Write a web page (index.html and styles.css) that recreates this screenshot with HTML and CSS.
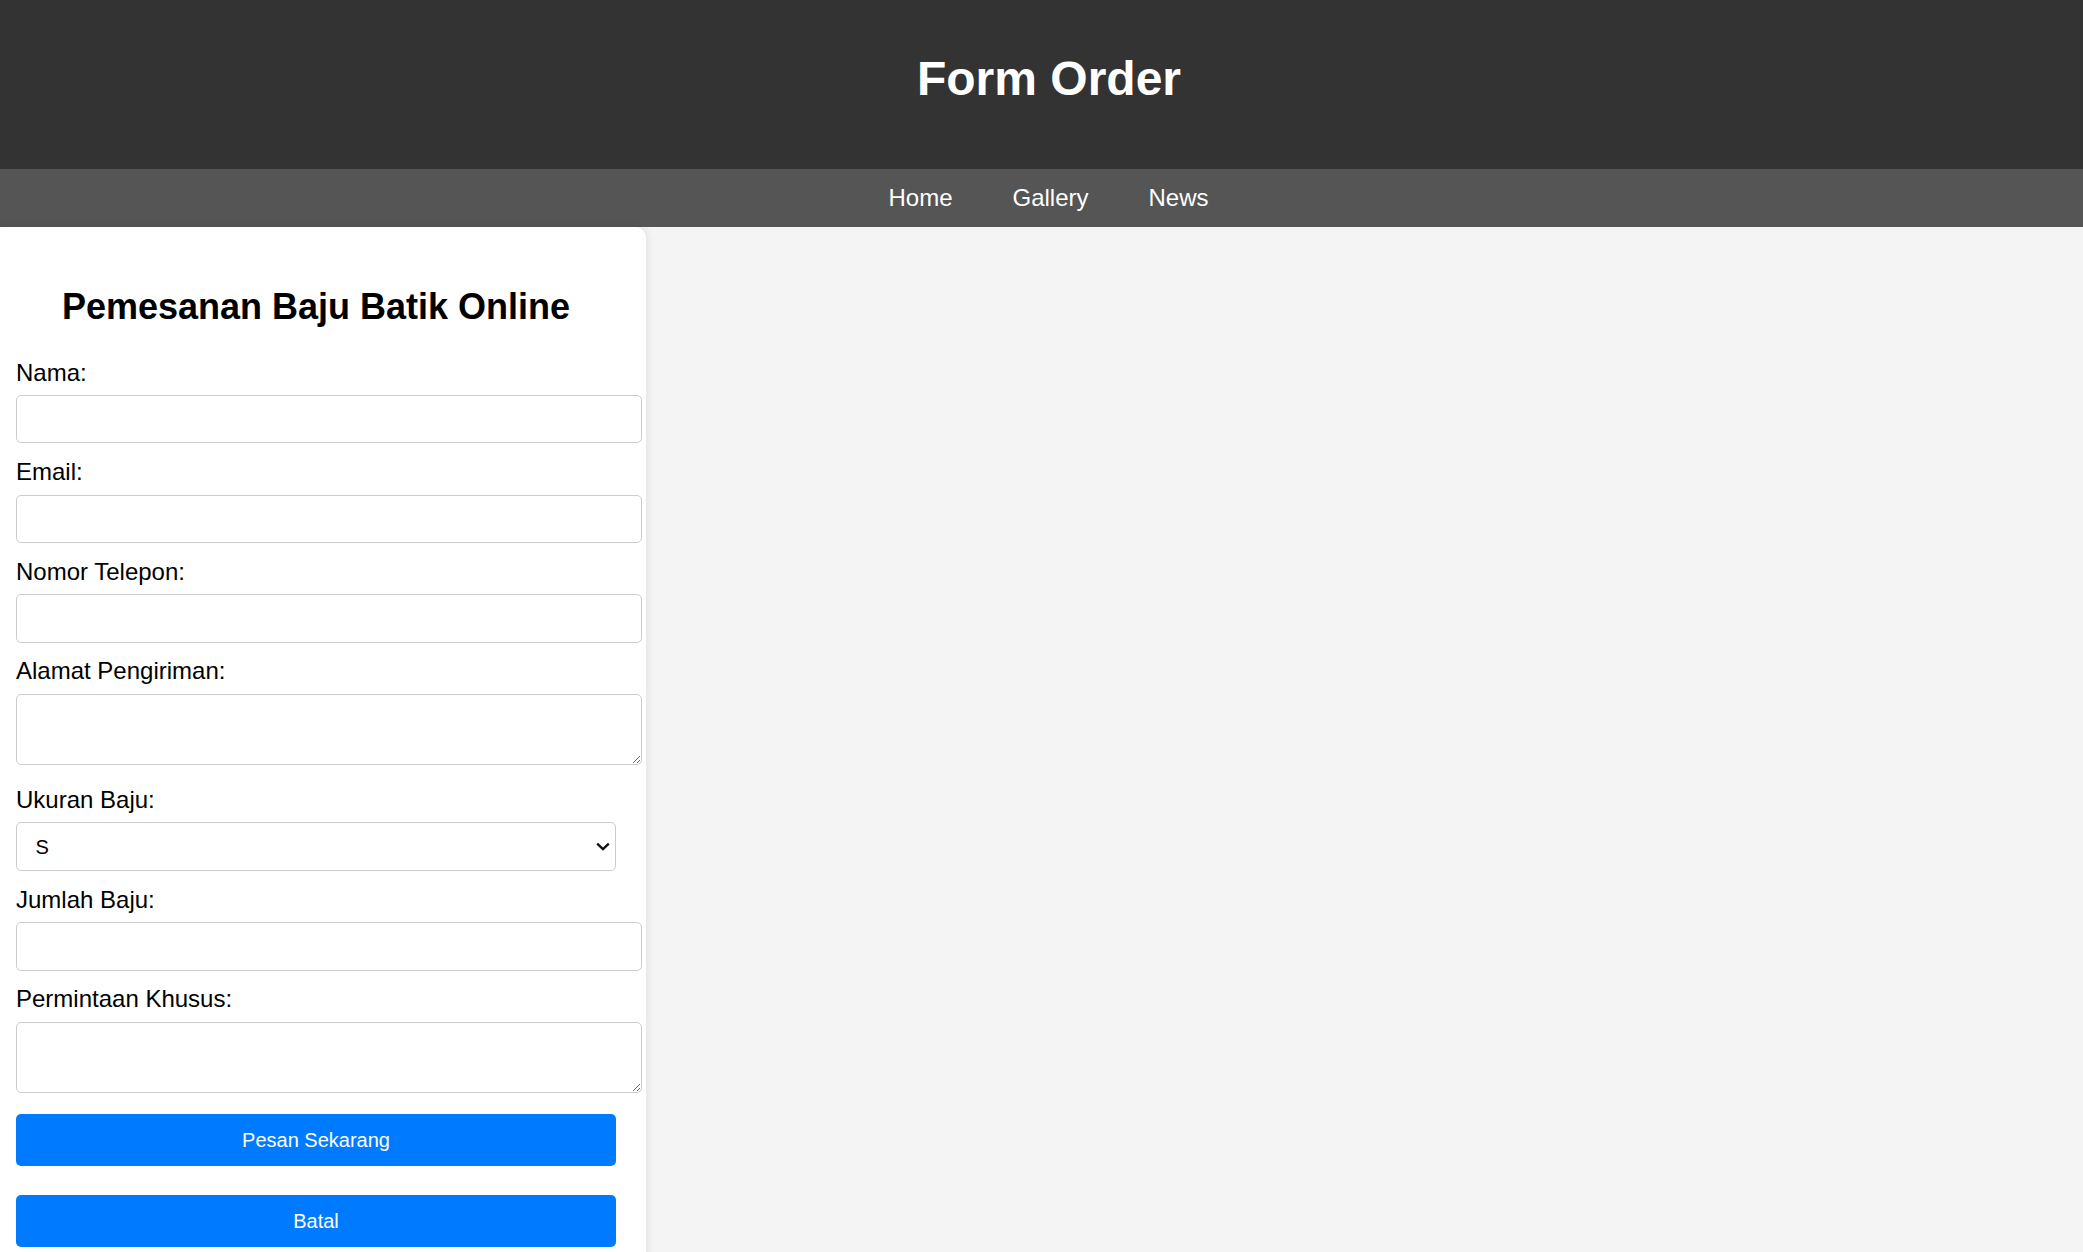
FILE: index.html
```html
<!DOCTYPE html>
<html lang="id">
<head>
<meta charset="utf-8">
<title>Form Order</title>
<link rel="stylesheet" href="styles.css">
</head>
<body>
<header class="site-header">
  <h1 class="site-title">Form Order</h1>
</header>
<nav class="site-nav">
  <a href="#" class="nav-link">Home</a>
  <a href="#" class="nav-link">Gallery</a>
  <a href="#" class="nav-link">News</a>
</nav>
<main class="page">
  <section class="card">
    <h2 class="card-title">Pemesanan Baju Batik Online</h2>
    <form class="order-form">
      <label class="field-label" for="nama">Nama:</label>
      <input class="field-input" type="text" id="nama">

      <label class="field-label" for="email">Email:</label>
      <input class="field-input" type="email" id="email">

      <label class="field-label" for="telp">Nomor Telepon:</label>
      <input class="field-input" type="tel" id="telp">

      <label class="field-label" for="alamat">Alamat Pengiriman:</label>
      <textarea class="field-area" id="alamat"></textarea>

      <label class="field-label" for="ukuran">Ukuran Baju:</label>
      <div class="select-wrap">
        <select class="field-select" id="ukuran">
          <option>S</option>
          <option>M</option>
          <option>L</option>
          <option>XL</option>
        </select>
        <svg class="select-arrow" width="14" height="9" viewBox="0 0 14 9" aria-hidden="true">
          <path d="M1.2 1.6 L7 7.2 L12.8 1.6" fill="none" stroke="#111" stroke-width="2.3"/>
        </svg>
      </div>

      <label class="field-label" for="jumlah">Jumlah Baju:</label>
      <input class="field-input" type="number" id="jumlah">

      <label class="field-label" for="khusus">Permintaan Khusus:</label>
      <textarea class="field-area" id="khusus"></textarea>

      <button type="submit" class="btn">Pesan Sekarang</button>
      <button type="reset" class="btn">Batal</button>
    </form>
  </section>
</main>
</body>
</html>
```
FILE: styles.css
```css
html, body {
  margin: 0;
  padding: 0;
}

body {
  background: #f4f4f4;
  font-family: "Liberation Sans", Arial, sans-serif;
  color: #000;
}

.site-header {
  background: #333333;
  color: #fff;
  height: 169px;
  box-sizing: border-box;
  padding: 51.3px 0 0 15px;
  text-align: center;
}

.site-title {
  margin: 0;
  font-size: 48px;
  font-weight: bold;
  line-height: normal;
}

.site-nav {
  background: #555555;
  height: 58px;
  display: flex;
  align-items: center;
  justify-content: center;
  gap: 60px;
  padding-left: 14px;
}

.nav-link {
  color: #fff;
  text-decoration: none;
  font-size: 24px;
}

.page {
  display: flex;
}

.card {
  width: 600px;
  background: #fff;
  padding: 0 30px 20px 16px;
  border-radius: 0 11px 11px 0;
  box-shadow: 0 0 10px rgba(0, 0, 0, 0.1);
}

.card-title {
  margin: 58.8px 0 31.4px;
  font-size: 36px;
  font-weight: bold;
  line-height: 41.4px;
  text-align: center;
}

.order-form {
  display: flex;
  flex-direction: column;
  align-items: flex-start;
}

.field-label {
  display: block;
  font-size: 24px;
  line-height: 27.6px;
  margin-bottom: 8.8px;
}

.field-input,
.field-area {
  display: block;
  box-sizing: content-box;
  width: 100%;
  border: 1px solid #cccccc;
  border-radius: 5px;
  background: #fff;
  font-family: "Liberation Sans", Arial, sans-serif;
  font-size: 18px;
  margin: 0;
}

.field-input {
  height: 46.5px;
  padding: 0 12px;
  margin-bottom: 14.7px;
}

.field-area {
  height: 45px;
  padding: 12px;
  margin-bottom: 20.9px;
  resize: vertical;
}

.select-wrap {
  position: relative;
  width: 100%;
  margin: 0 0 14.9px;
}

.field-select {
  display: block;
  box-sizing: border-box;
  width: 100%;
  height: 49px;
  padding: 0 40px 0 18.5px;
  border: 1px solid #cccccc;
  border-radius: 5px;
  background: #fff;
  color: #000;
  font-family: "Liberation Sans", Arial, sans-serif;
  font-size: 20px;
  margin: 0;
  -webkit-appearance: none;
  appearance: none;
}

.select-arrow {
  position: absolute;
  right: 6px;
  top: 20px;
  pointer-events: none;
}

.btn {
  display: block;
  width: 100%;
  height: 52.7px;
  margin: 0 0 28.3px;
  border: none;
  border-radius: 5px;
  background: #007bff;
  color: #fff;
  font-family: "Liberation Sans", Arial, sans-serif;
  font-size: 20px;
  cursor: pointer;
}
```
